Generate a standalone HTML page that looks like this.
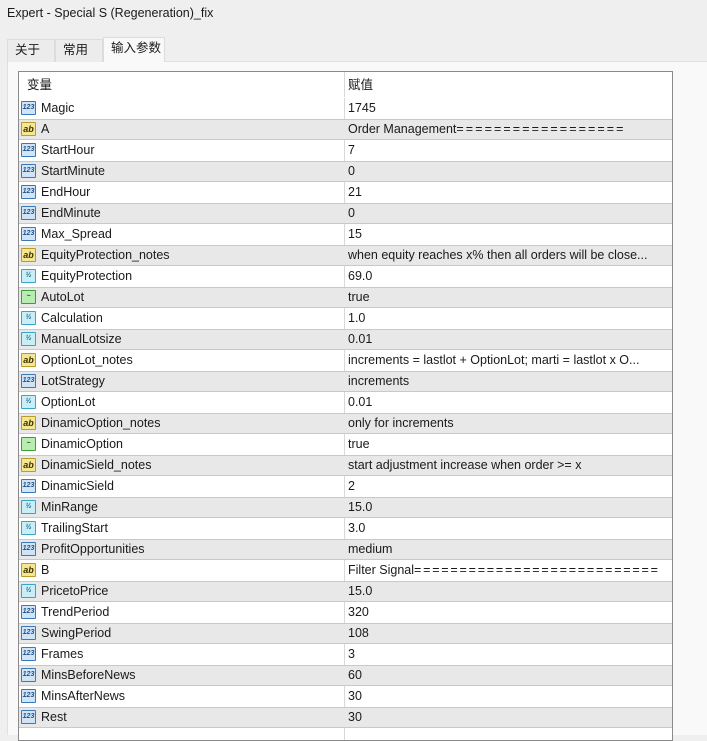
<!DOCTYPE html>
<html><head><meta charset="utf-8"><style>
*{margin:0;padding:0;box-sizing:border-box}
body{width:707px;height:735px;overflow:hidden;background:#efefef;font-family:"Liberation Sans","Noto Sans CJK SC",sans-serif;font-size:12.5px;line-height:15px;color:#1a1a1a;position:relative}
.title{position:absolute;left:7px;top:6px;font-size:12.5px}
.tab{position:absolute;height:23px;top:39px;border:1px solid #dcdcdc;border-bottom:none;background:#ececec;padding:3px 0 0 7px}
.panel{position:absolute;left:7px;top:61px;width:700px;height:674px;background:#f9f9f9;border-top:1px solid #e0e0e0;border-left:1px solid #e0e0e0}
.frame{position:absolute;left:18px;top:71px;width:655px;height:670px;border:1px solid #8a8a8a;background:#fff;overflow:hidden}
.hdr{height:26px;position:relative;border-bottom:1px solid #fff}
.hdr span{position:absolute;top:6px}
.row{height:21px;position:relative;white-space:nowrap}
.row.g{background:#e8e8e8;border-top:1px solid #c9c9c9;border-bottom:1px solid #c9c9c9}
.row .n{position:absolute;left:22px;top:3px}
.row.g .n,.row.g .v{top:2px}
.row .v{position:absolute;left:329px;top:3px}
.col{position:absolute;left:325px;top:0;width:1px;height:100%;background:#d8d8d8}
.ic{position:absolute;left:2px;top:3px;width:15px;height:14px;border:1px solid;border-radius:1px;font-size:7px;line-height:12px;text-align:center;font-weight:bold}
.row.g .ic{top:2px}
.i1{background:#cfe4f7;border-color:#3c78b8;color:#1f4f8a}
.ia{background:#f5e690;border-color:#b89b2a;color:#3a3000;font-size:9px}
.ih{background:#c9eef7;border-color:#3aa4c4;color:#0e5f78}
.ib{background:#b9ecb0;border-color:#3e9e35;color:#1b5a12}
</style></head><body>
<div class="title">Expert - Special S (Regeneration)_fix</div>
<div class="panel"></div>
<div class="tab" style="left:7px;width:48px">关于</div>
<div class="tab" style="left:55px;width:48px">常用</div>
<div class="tab" style="left:103px;width:62px;top:37px;height:25px;background:#f9f9f9;padding-top:3px">输入参数</div>
<div class="frame">
<div class="col"></div>
<div class="hdr"><span style="left:8px">变量</span><span style="left:329px">赋值</span></div>
<div class="row"><i class="ic i1">123</i><span class="n">Magic</span><span class="v">1745</span></div>
<div class="row g"><i class="ic ia">ab</i><span class="n">A</span><span class="v">Order Management<span style="letter-spacing:2.1px">==================</span></span></div>
<div class="row"><i class="ic i1">123</i><span class="n">StartHour</span><span class="v">7</span></div>
<div class="row g"><i class="ic i1">123</i><span class="n">StartMinute</span><span class="v">0</span></div>
<div class="row"><i class="ic i1">123</i><span class="n">EndHour</span><span class="v">21</span></div>
<div class="row g"><i class="ic i1">123</i><span class="n">EndMinute</span><span class="v">0</span></div>
<div class="row"><i class="ic i1">123</i><span class="n">Max_Spread</span><span class="v">15</span></div>
<div class="row g"><i class="ic ia">ab</i><span class="n">EquityProtection_notes</span><span class="v">when equity reaches x% then all orders will be close...</span></div>
<div class="row"><i class="ic ih">½</i><span class="n">EquityProtection</span><span class="v">69.0</span></div>
<div class="row g"><i class="ic ib">~</i><span class="n">AutoLot</span><span class="v">true</span></div>
<div class="row"><i class="ic ih">½</i><span class="n">Calculation</span><span class="v">1.0</span></div>
<div class="row g"><i class="ic ih">½</i><span class="n">ManualLotsize</span><span class="v">0.01</span></div>
<div class="row"><i class="ic ia">ab</i><span class="n">OptionLot_notes</span><span class="v">increments = lastlot + OptionLot; marti = lastlot x O...</span></div>
<div class="row g"><i class="ic i1">123</i><span class="n">LotStrategy</span><span class="v">increments</span></div>
<div class="row"><i class="ic ih">½</i><span class="n">OptionLot</span><span class="v">0.01</span></div>
<div class="row g"><i class="ic ia">ab</i><span class="n">DinamicOption_notes</span><span class="v">only for increments</span></div>
<div class="row"><i class="ic ib">~</i><span class="n">DinamicOption</span><span class="v">true</span></div>
<div class="row g"><i class="ic ia">ab</i><span class="n">DinamicSield_notes</span><span class="v">start adjustment increase when order &gt;= x</span></div>
<div class="row"><i class="ic i1">123</i><span class="n">DinamicSield</span><span class="v">2</span></div>
<div class="row g"><i class="ic ih">½</i><span class="n">MinRange</span><span class="v">15.0</span></div>
<div class="row"><i class="ic ih">½</i><span class="n">TrailingStart</span><span class="v">3.0</span></div>
<div class="row g"><i class="ic i1">123</i><span class="n">ProfitOpportunities</span><span class="v">medium</span></div>
<div class="row"><i class="ic ia">ab</i><span class="n">B</span><span class="v">Filter Signal<span style="letter-spacing:1.8px">===========================</span></span></div>
<div class="row g"><i class="ic ih">½</i><span class="n">PricetoPrice</span><span class="v">15.0</span></div>
<div class="row"><i class="ic i1">123</i><span class="n">TrendPeriod</span><span class="v">320</span></div>
<div class="row g"><i class="ic i1">123</i><span class="n">SwingPeriod</span><span class="v">108</span></div>
<div class="row"><i class="ic i1">123</i><span class="n">Frames</span><span class="v">3</span></div>
<div class="row g"><i class="ic i1">123</i><span class="n">MinsBeforeNews</span><span class="v">60</span></div>
<div class="row"><i class="ic i1">123</i><span class="n">MinsAfterNews</span><span class="v">30</span></div>
<div class="row g"><i class="ic i1">123</i><span class="n">Rest</span><span class="v">30</span></div>
</div>
</body></html>
